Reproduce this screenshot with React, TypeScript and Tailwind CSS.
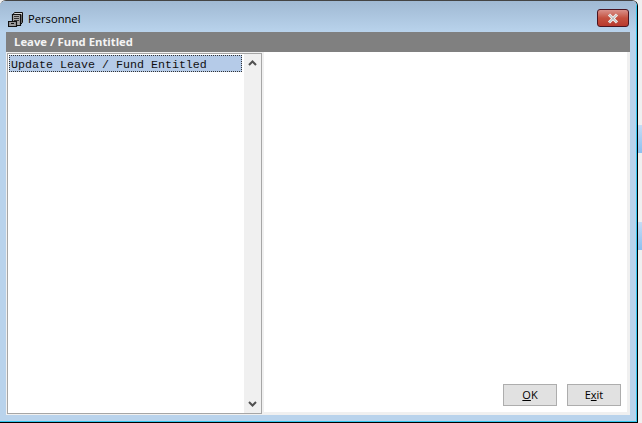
import React from "react";

function DrawerIcon() {
  return (
    <svg width="16" height="17" viewBox="0 0 16 17" className="shrink-0">
      <path d="M6.5 1.5H14.5V11.5L13 13V3.5H5Z" fill="#d8d8d8" stroke="#111" />
      <path d="M4.5 3.5H12.5V14.5H4.5Z" fill="#a9a9a9" stroke="#111" strokeWidth="1.2" />
      <path d="M6 5.5H11M6 7.5H11M6 9.5H11" stroke="#333" />
      <path d="M0.5 10.5H8.5V15.5H0.5Z" fill="#9a9a9a" stroke="#111" strokeWidth="1.2" />
      <path d="M3 12.5H6" stroke="#111" />
    </svg>
  );
}

export default function App() {
  return (
    <div className="w-[642px] h-[423px] bg-[#f0f0f0] flex overflow-hidden font-['Liberation_Sans',sans-serif]">
      <div className="h-[423px] w-[638px] shrink-0 border-r border-b border-black border-t border-t-[#444] rounded-t-[6px] overflow-hidden">
        <div className="h-full flex flex-col border-r border-b border-r-[#35c6ee] border-b-[#35c6ee] bg-[#b9d3ec]">
          <div className="h-[31px] shrink-0 flex items-center pl-2 pr-[7px] pt-[5px] bg-gradient-to-b from-[#a0b9d3] to-[#b9d3ec]">
            <DrawerIcon />
            <span className="ml-1 text-[11.2px] text-black font-['Open_Sans',sans-serif]">Personnel</span>
            <button className="ml-auto -mt-[2px] w-[32px] h-[18px] rounded-[3px] border border-[#4a1420] bg-gradient-to-b from-[#d9908a] via-[#c4503f] to-[#b8392d] flex items-center justify-center">
              <svg width="14" height="11" viewBox="0 0 14 11">
                <path d="M3 1.5L11 9.5M11 1.5L3 9.5" stroke="#f3f3f3" strokeWidth="3" />
                <path d="M3 1.5L11 9.5M11 1.5L3 9.5" stroke="#8a8a8a" strokeWidth="0.7" />
              </svg>
            </button>
          </div>
          <div className="flex-1 min-h-0 ml-[6px] mr-[6px] mb-[6px] bg-[#f0f0f0] flex flex-col">
            <div className="h-[20px] shrink-0 bg-[#808080] flex items-center pl-[8px] text-[11.3px] font-bold text-[#f4f4f4] font-['Open_Sans',sans-serif]">
              Leave / Fund Entitled
            </div>
            <div className="flex-1 min-h-0 flex">
              <div className="w-[255px] ml-[1px] mt-[1px] mb-[1px] border border-[#a6a6a6] bg-white flex">
                <div className="flex-1 pt-[1px] pl-[1px]">
                  <div className="h-[17px] border border-dotted border-[#333] bg-[#b5cbe8] font-['Liberation_Mono',monospace] text-[11.67px] leading-[18px] text-[#111] pl-[1px] whitespace-nowrap">
                    Update Leave / Fund Entitled
                  </div>
                </div>
                <div className="w-[17px] ml-[2px] bg-[#f0f0f0] flex flex-col justify-between items-center py-[6px]">
                  <svg width="9" height="6" viewBox="0 0 9 6"><path d="M1 5L4.5 1.5L8 5" fill="none" stroke="#505050" strokeWidth="2" /></svg>
                  <svg width="9" height="6" viewBox="0 0 9 6"><path d="M1 1L4.5 4.5L8 1" fill="none" stroke="#505050" strokeWidth="2" /></svg>
                </div>
              </div>
              <div className="flex-1 ml-[2px] mr-[3px] mb-[3px] bg-white flex items-end justify-end gap-[10px] pr-[6px] pb-[6px]">
                <button className="w-[54px] h-[22px] bg-[#e1e1e1] border border-[#adadad] text-[11px] text-black font-['Open_Sans',sans-serif]"><span className="underline">O</span>K</button>
                <button className="w-[54px] h-[22px] bg-[#e1e1e1] border border-[#adadad] text-[11px] text-black font-['Open_Sans',sans-serif]">E<span className="underline">x</span>it</button>
              </div>
            </div>
          </div>
        </div>
      </div>
      <div className="flex-1 flex flex-col pt-[125px]">
        <div className="h-[28px] bg-gradient-to-b from-[#c6dcf5] to-[#8cc0f0]" />
        <div className="h-[69px]" />
        <div className="h-[28px] bg-gradient-to-b from-[#c6dcf5] to-[#8cc0f0]" />
      </div>
    </div>
  );
}
